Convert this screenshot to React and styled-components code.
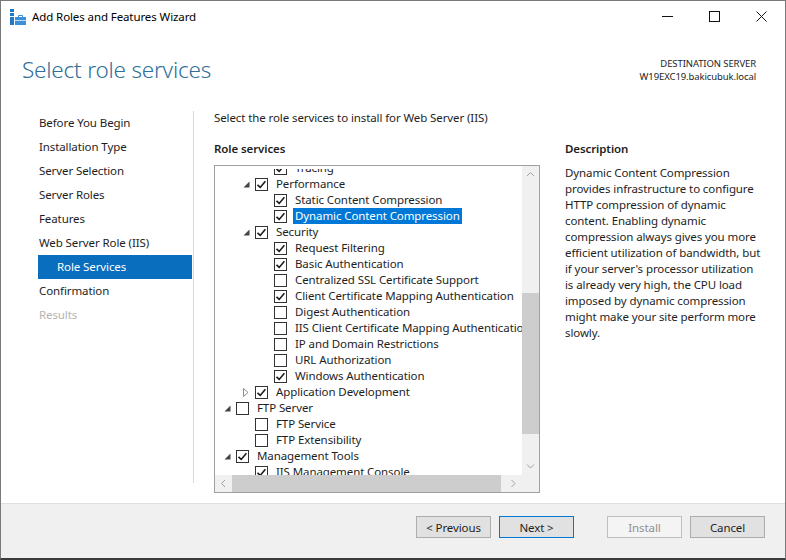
import React from 'react'
import styled, { createGlobalStyle } from 'styled-components'

const GlobalStyle = createGlobalStyle`
  html, body {
    margin: 0;
    padding: 0;
    background: #ffffff;
  }
  body {
    font-family: "Segoe UI", "Noto Sans", "Open Sans", sans-serif;
    font-size: 11.5px;
    letter-spacing: -0.1px;
    color: #1e1e1e;
  }
`

const navItems = [
  { label: 'Before You Begin' },
  { label: 'Installation Type' },
  { label: 'Server Selection' },
  { label: 'Server Roles' },
  { label: 'Features' },
  { label: 'Web Server Role (IIS)' },
  { label: 'Role Services', active: true },
  { label: 'Confirmation' },
  { label: 'Results', disabled: true },
]

const treeRows = [
  { label: 'Tracing', level: 3, checked: true },
  { label: 'Performance', level: 2, checked: true, expander: 'open' },
  { label: 'Static Content Compression', level: 3, checked: true },
  { label: 'Dynamic Content Compression', level: 3, checked: true, selected: true },
  { label: 'Security', level: 2, checked: true, expander: 'open' },
  { label: 'Request Filtering', level: 3, checked: true },
  { label: 'Basic Authentication', level: 3, checked: true },
  { label: 'Centralized SSL Certificate Support', level: 3 },
  { label: 'Client Certificate Mapping Authentication', level: 3, checked: true },
  { label: 'Digest Authentication', level: 3 },
  { label: 'IIS Client Certificate Mapping Authentication', level: 3 },
  { label: 'IP and Domain Restrictions', level: 3 },
  { label: 'URL Authorization', level: 3 },
  { label: 'Windows Authentication', level: 3, checked: true },
  { label: 'Application Development', level: 2, checked: true, expander: 'closed' },
  { label: 'FTP Server', level: 1, expander: 'open' },
  { label: 'FTP Service', level: 2 },
  { label: 'FTP Extensibility', level: 2 },
  { label: 'Management Tools', level: 1, checked: true, expander: 'open' },
  { label: 'IIS Management Console', level: 2, checked: true },
]

const description =
  "Dynamic Content Compression provides infrastructure to configure HTTP compression of dynamic content. Enabling dynamic compression always gives you more efficient utilization of bandwidth, but if your server's processor utilization is already very high, the CPU load imposed by dynamic compression might make your site perform more slowly."

function AppIcon() {
  return (
    <svg width="16" height="16" viewBox="0 0 16 16">
      <rect x="0" y="0" width="4" height="3" fill="#1f78c8" />
      <rect x="0" y="4" width="4" height="3" fill="#1f78c8" />
      <rect x="0" y="8" width="4" height="8" fill="#1f78c8" />
      <rect x="5" y="8" width="11" height="8" fill="#3d8fd6" />
      <path d="M8.5 8 V6.5 H12.5 V8" fill="none" stroke="#3d8fd6" strokeWidth="1" />
      <rect x="5" y="11" width="11" height="1" fill="#bcd9f2" />
    </svg>
  )
}

function CheckMark() {
  return (
    <svg width="13" height="13" viewBox="0 0 13 13">
      <path d="M2.5 6.8 L5.2 9.4 L10.4 3.2" fill="none" stroke="#1a1a1a" strokeWidth="1.6" />
    </svg>
  )
}

function Expander({ state }) {
  if (state === 'open') {
    return (
      <svg width="7" height="7" viewBox="0 0 7 7">
        <path d="M6.5 0.5 L6.5 6.5 L0.5 6.5 Z" fill="#444" />
      </svg>
    )
  }
  return (
    <svg width="6" height="9" viewBox="0 0 6 9">
      <path d="M0.5 0.5 L5 4.5 L0.5 8.5 Z" fill="none" stroke="#8a8a8a" strokeWidth="1" />
    </svg>
  )
}

function Chevron({ dir }) {
  const paths = {
    up: 'M1 5 L4.5 1.5 L8 5',
    down: 'M1 1.5 L4.5 5 L8 1.5',
    left: 'M5 1 L1.5 4.5 L5 8',
    right: 'M1.5 1 L5 4.5 L1.5 8',
  }
  const vertical = dir === 'up' || dir === 'down'
  return (
    <svg width={vertical ? 9 : 7} height={vertical ? 7 : 9} viewBox={vertical ? '0 0 9 7' : '0 0 7 9'}>
      <path d={paths[dir]} fill="none" stroke="#a0a0a0" strokeWidth="1" />
    </svg>
  )
}

export default function App() {
  return (
    <>
      <GlobalStyle />
      <Window>
        <TitleBar>
          <TitleLeft>
            <AppIcon />
            <TitleText>Add Roles and Features Wizard</TitleText>
          </TitleLeft>
          <Controls>
            <ControlButton>
              <svg width="11" height="11" viewBox="0 0 11 11">
                <path d="M0 5.5 H11" stroke="#111" strokeWidth="1" />
              </svg>
            </ControlButton>
            <ControlButton>
              <svg width="11" height="11" viewBox="0 0 11 11">
                <rect x="0.5" y="0.5" width="10" height="10" fill="none" stroke="#111" strokeWidth="1" />
              </svg>
            </ControlButton>
            <ControlButton>
              <svg width="11" height="11" viewBox="0 0 11 11">
                <path d="M0.5 0.5 L10.5 10.5 M10.5 0.5 L0.5 10.5" stroke="#111" strokeWidth="1" />
              </svg>
            </ControlButton>
          </Controls>
        </TitleBar>

        <Header>
          <PageTitle>Select role services</PageTitle>
          <Destination>
            <div>DESTINATION SERVER</div>
            <div>W19EXC19.bakicubuk.local</div>
          </Destination>
        </Header>

        <Main>
          <Nav>
            {navItems.map((item) => (
              <NavItem key={item.label} $active={item.active} $disabled={item.disabled}>
                {item.label}
              </NavItem>
            ))}
          </Nav>

          <Content>
            <Intro>Select the role services to install for Web Server (IIS)</Intro>
            <Columns>
              <RolesColumn>
                <SectionHeading>Role services</SectionHeading>
                <TreeBox>
                  <TreeViewport>
                    <TreeClip>
                      <TreeList>
                        {treeRows.map((row) => (
                          <TreeRow key={row.label} $level={row.level}>
                            <ExpanderSlot>{row.expander && <Expander state={row.expander} />}</ExpanderSlot>
                            <CheckBox>{row.checked && <CheckMark />}</CheckBox>
                            <RowLabel $selected={row.selected}>{row.label}</RowLabel>
                          </TreeRow>
                        ))}
                      </TreeList>
                    </TreeClip>
                  </TreeViewport>
                  <VScroll>
                    <ArrowCell><Chevron dir="up" /></ArrowCell>
                    <VTrack>
                      <VThumb />
                    </VTrack>
                    <ArrowCell><Chevron dir="down" /></ArrowCell>
                  </VScroll>
                  <HScroll>
                    <HArrowCell><Chevron dir="left" /></HArrowCell>
                    <HTrack>
                      <HThumb />
                    </HTrack>
                    <HArrowCell><Chevron dir="right" /></HArrowCell>
                  </HScroll>
                  <Corner />
                </TreeBox>
              </RolesColumn>

              <DescColumn>
                <SectionHeading>Description</SectionHeading>
                <DescText>{description}</DescText>
              </DescColumn>
            </Columns>
          </Content>
        </Main>

        <Footer>
          <Button>&lt; Previous</Button>
          <Button $primary>Next &gt;</Button>
          <Button $disabled $spaced>Install</Button>
          <Button>Cancel</Button>
        </Footer>
      </Window>
    </>
  )
}

const Window = styled.div`
  width: 786px;
  height: 560px;
  box-sizing: border-box;
  border: 1px solid #7a7a7a;
  border-bottom: 2px solid #3c3c3c;
  display: flex;
  flex-direction: column;
  background: #ffffff;
  overflow: hidden;
`

const TitleBar = styled.div`
  height: 30px;
  display: flex;
  align-items: center;
  justify-content: space-between;
  flex-shrink: 0;
`

const TitleLeft = styled.div`
  display: flex;
  align-items: center;
  gap: 6px;
  padding-left: 9px;
  padding-top: 1px;
`

const TitleText = styled.span`
  font-size: 11.5px;
  color: #000;
`

const Controls = styled.div`
  display: flex;
  height: 100%;
`

const ControlButton = styled.div`
  width: 47px;
  height: 100%;
  display: flex;
  align-items: center;
  justify-content: center;
`

const Header = styled.div`
  height: 80px;
  display: flex;
  justify-content: space-between;
  align-items: flex-start;
  padding: 0 29px 0 21px;
  flex-shrink: 0;
`

const PageTitle = styled.h1`
  margin: 24px 0 0;
  font-size: 22.5px;
  line-height: 30px;
  font-weight: 300;
  color: #2f6f98;
  letter-spacing: -0.2px;
`

const Destination = styled.div`
  margin-top: 26px;
  text-align: right;
  font-size: 9.5px;
  line-height: 13px;
  color: #1e1e1e;
`

const Main = styled.div`
  flex: 1;
  display: flex;
  min-height: 0;
`

const Nav = styled.div`
  width: 154px;
  margin-left: 37px;
  flex-shrink: 0;
  display: flex;
  flex-direction: column;
`

const NavItem = styled.div`
  height: 24px;
  line-height: 24px;
  padding-left: ${(p) => (p.$active ? '19px' : '1px')};
  background: ${(p) => (p.$active ? '#0a6ebf' : 'transparent')};
  color: ${(p) => (p.$active ? '#ffffff' : p.$disabled ? '#b4b4b4' : '#1e1e1e')};
  white-space: nowrap;
`

const Content = styled.div`
  flex: 1;
  border-left: 1px solid #d9d9d9;
  margin-left: 1px;
  margin-bottom: 20px;
  padding-left: 20px;
  display: flex;
  flex-direction: column;
`

const Intro = styled.div`
  height: 16px;
  line-height: 16px;
  margin-top: -1px;
`

const Columns = styled.div`
  display: flex;
  gap: 25px;
  margin-top: 15px;
`

const RolesColumn = styled.div`
  width: 326px;
  display: flex;
  flex-direction: column;
`

const DescColumn = styled.div`
  width: 198px;
  display: flex;
  flex-direction: column;
`

const SectionHeading = styled.div`
  height: 16px;
  line-height: 16px;
  font-weight: 600;
  margin-bottom: 8px;
`

const TreeBox = styled.div`
  width: 326px;
  height: 328px;
  box-sizing: border-box;
  border: 1px solid #a0a0a0;
  display: grid;
  grid-template-columns: 1fr 17px;
  grid-template-rows: 1fr 17px;
  background: #ffffff;
`

const TreeViewport = styled.div`
  overflow: hidden;
  padding-top: 3px;
`

const TreeClip = styled.div`
  height: 100%;
  overflow: hidden;
`

const TreeList = styled.div`
  margin-top: -9px;
  display: flex;
  flex-direction: column;
`

const TreeRow = styled.div`
  height: 16px;
  display: flex;
  align-items: center;
  padding-left: ${(p) => 6 + (p.$level - 1) * 19}px;
  white-space: nowrap;
`

const ExpanderSlot = styled.div`
  width: 12px;
  height: 16px;
  flex-shrink: 0;
  display: flex;
  align-items: center;
  justify-content: flex-start;
  padding-left: 3px;
  box-sizing: border-box;
  margin-right: 3px;
`

const CheckBox = styled.div`
  width: 13px;
  height: 13px;
  box-sizing: border-box;
  border: 1px solid #333333;
  background: #ffffff;
  flex-shrink: 0;
  display: flex;
  align-items: center;
  justify-content: center;
  svg {
    margin: -1px;
  }
`

const RowLabel = styled.span`
  flex-shrink: 0;
  margin-left: 6px;
  padding: 0 2px;
  height: 16px;
  line-height: 16px;
  background: ${(p) => (p.$selected ? '#0078d7' : 'transparent')};
  color: ${(p) => (p.$selected ? '#ffffff' : '#1e1e1e')};
`

const VScroll = styled.div`
  background: #f0f0f0;
  display: flex;
  flex-direction: column;
`

const ArrowCell = styled.div`
  height: 17px;
  display: flex;
  align-items: center;
  justify-content: center;
  flex-shrink: 0;
`

const VTrack = styled.div`
  flex: 1;
  display: flex;
  flex-direction: column;
  padding-top: 110px;
`

const VThumb = styled.div`
  height: 141px;
  background: #cdcdcd;
`

const HScroll = styled.div`
  background: #f0f0f0;
  display: flex;
`

const HArrowCell = styled.div`
  width: 17px;
  display: flex;
  align-items: center;
  justify-content: center;
  flex-shrink: 0;
`

const HTrack = styled.div`
  flex: 1;
  display: flex;
  align-items: stretch;
  padding-right: 4px;
`

const HThumb = styled.div`
  flex: 1;
  background: #cdcdcd;
`

const Corner = styled.div`
  background: #f0f0f0;
`

const DescText = styled.p`
  margin: 0;
  line-height: 16px;
  color: #1e1e1e;
`

const Footer = styled.div`
  height: 42px;
  flex-shrink: 0;
  background: #f0f0f0;
  border-top: 1px solid #dfdfdf;
  display: flex;
  justify-content: flex-end;
  align-items: flex-start;
  padding: 12px 20px 0 0;
  gap: 8px;
`

const Button = styled.div`
  width: 75px;
  height: 22px;
  box-sizing: border-box;
  margin-left: ${(p) => (p.$spaced ? '25px' : '0')};
  border: 1px solid ${(p) => (p.$primary ? '#0078d7' : p.$disabled ? '#bfbfbf' : '#adadad')};
  background: ${(p) => (p.$disabled ? '#f4f4f4' : '#e1e1e1')};
  color: ${(p) => (p.$disabled ? '#8f8f8f' : '#1e1e1e')};
  display: flex;
  align-items: center;
  justify-content: center;
`
